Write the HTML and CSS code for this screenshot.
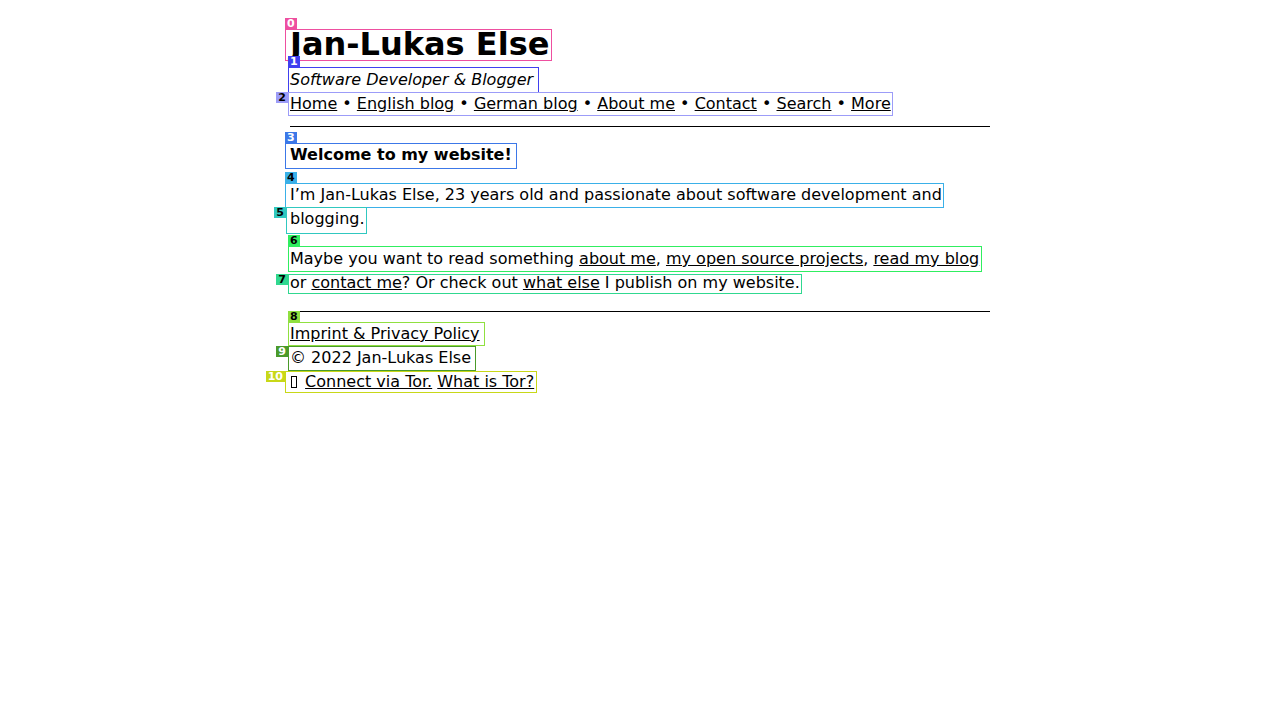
FILE: index.html
```html
<!DOCTYPE html>
<html lang="en">
<head>
<meta charset="utf-8">
<title>Jan-Lukas Else</title>
<link rel="stylesheet" href="styles.css">
</head>
<body>
<div class="page">
  <header>
    <h1 class="title"><span class="mk m0">Jan-Lukas Else<span class="box"><span class="tag top">0</span></span></span></h1>
    <p class="subtitle"><span class="mk m1">Software Developer &amp; Blogger<span class="box"><span class="tag top">1</span></span></span></p>
    <nav class="nav"><span class="mk m2"><a href="#">Home</a> • <a href="#">English blog</a> • <a href="#">German blog</a> • <a href="#">About me</a> • <a href="#">Contact</a> • <a href="#">Search</a> • <a href="#">More</a><span class="box"><span class="tag left">2</span></span></span></nav>
  </header>
  <hr class="rule rule-top">
  <main>
    <p class="welcome"><span class="mk m3">Welcome to my website!<span class="box"><span class="tag top">3</span></span></span></p>
    <p class="text"><span class="mk m4">I’m Jan-Lukas Else, 23 years old and passionate about software development and<span class="box"><span class="tag top">4</span></span></span> <span class="mk m5">blogging.<span class="box"><span class="tag left">5</span></span></span></p>
    <p class="text"><span class="mk m6">Maybe you want to read something <a href="#">about me</a>, <a href="#">my open source projects</a>, <a href="#">read my blog</a><span class="box"><span class="tag top">6</span></span></span> <span class="mk m7">or <a href="#">contact me</a>? Or check out <a href="#">what else</a> I publish on my website.<span class="box"><span class="tag left">7</span></span></span></p>
  </main>
  <hr class="rule rule-bottom">
  <footer class="footer">
    <p class="foot-line"><span class="mk m8"><a href="#">Imprint &amp; Privacy Policy</a><span class="box"><span class="tag top">8</span></span></span></p>
    <p class="foot-line"><span class="mk m9">© 2022 Jan-Lukas Else<span class="box"><span class="tag left">9</span></span></span></p>
    <p class="foot-line"><span class="mk m10"><span class="tofu"></span> <a href="#">Connect via Tor.</a> <a href="#">What is Tor?</a><span class="box"><span class="tag left">10</span></span></span></p>
  </footer>
</div>
</body>
</html>
```
FILE: styles.css
```css
body {
  margin: 0;
  background: #fff;
  color: #000;
  font-family: "DejaVu Sans", "Liberation Sans", sans-serif;
  font-size: 16px;
  line-height: 24px;
}

.page {
  width: 700px;
  margin: 0 auto;
  padding-top: 20px;
}

a {
  color: #000;
  text-decoration: underline;
}

.title {
  margin: 0;
  font-size: 32px;
  line-height: 48px;
  font-weight: bold;
}

.subtitle {
  margin: 0;
  font-style: italic;
}

.nav {
  margin: 0;
}

.rule {
  border: 0;
  border-top: 1px solid #000;
  height: 0;
}

.rule-top {
  margin: 10px 0 16px;
}

.rule-bottom {
  margin: 16px 0 10px;
}

.welcome {
  margin: 0;
  font-weight: bold;
}

.text {
  margin: 16px 0;
}

.foot-line {
  margin: 0;
}

.tofu {
  display: inline-block;
  width: 4px;
  height: 10px;
  border: 1px solid #000;
  margin: 0 3px 0 1px;
  vertical-align: -1px;
}

/* annotation marks */
.mk {
  position: relative;
  display: inline-block;
  --t: 0px;
  --r: -2px;
  --b: -2px;
  --l: -2px;
  --c: #888;
  --tc: #fff;
}

.box {
  position: absolute;
  top: var(--t);
  right: var(--r);
  bottom: var(--b);
  left: var(--l);
  border: 1px solid var(--c);
  pointer-events: none;
}

.tag {
  position: absolute;
  background: var(--c);
  color: var(--tc);
  font-family: "DejaVu Sans", sans-serif;
  font-size: 11px;
  line-height: 11px;
  font-weight: bold;
  font-style: normal;
  padding: 0 2px;
  text-decoration: none;
}

.tag.top {
  left: -1px;
  bottom: calc(100% + 1px);
}

.tag.left {
  right: calc(100% + 1px);
  top: -1px;
}

.m0 { --c: #ee4fa0; --t: 9px; --b: 7px; --l: -5px; --r: -3px; }
.m1 { --c: #4040f0; --t: -1px; --b: -1px; --r: -6px; }
.m2 { --c: #9c9cf8; --tc: #000; --t: 0px; --b: 0px; }
.m3 { --c: #3c78e8; --t: 0px; --b: -2px; --l: -5px; --r: -5px; }
.m4 { --c: #3ab0e8; --tc: #000; --t: 0px; --b: -1px; --l: -5px; }
.m5 { --c: #30c8c0; --tc: #000; --t: 0px; --b: -3px; --l: -4px; }
.m6 { --c: #30ee60; --tc: #000; --t: -1px; --b: -1px; --r: -3px; }
.m7 { --c: #30d890; --tc: #000; --t: 3px; --b: 1px; }
.m8 { --c: #90e040; --tc: #000; --t: 0px; --b: 0px; --r: -5px; }
.m9 { --c: #4a9a2a; --t: 0px; --b: -1px; --r: -5px; }
.m10 { --c: #c8d818; --t: 1px; --b: 1px; --l: -5px; --r: -3px; }
```
